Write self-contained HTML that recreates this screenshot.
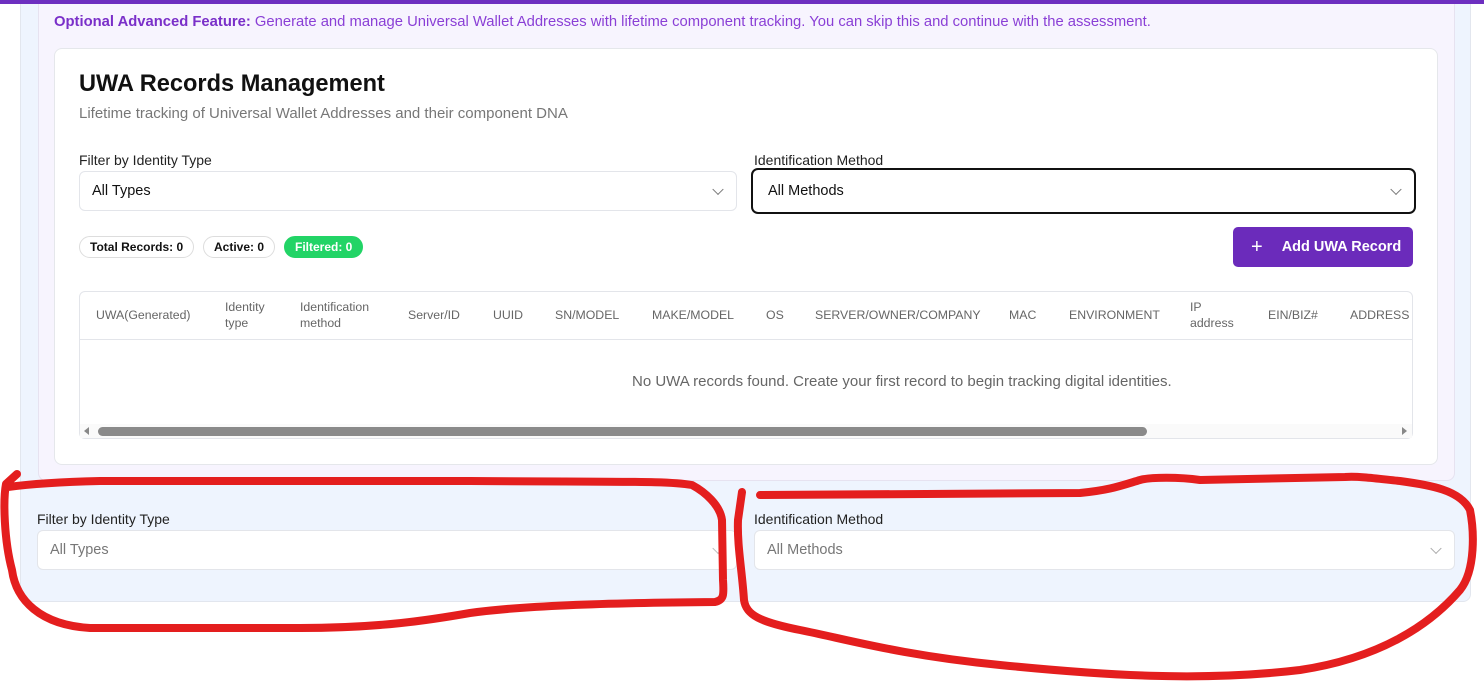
<!DOCTYPE html>
<html><head><meta charset="utf-8"><style>
*{box-sizing:border-box;margin:0;padding:0}
body{width:1484px;height:684px;background:#fff;font-family:"Liberation Sans",sans-serif;position:relative;overflow:hidden;color:#111}
.abs{position:absolute}
.topbar{left:0;top:0;width:1484px;height:4px;background:#6d2fc0}
.outer{left:20px;top:-10px;width:1451px;height:612px;background:#eef4fe;border:1px solid #e2e6ee;border-radius:8px}
.inner{left:38px;top:-10px;width:1417px;height:491px;background:#f7f4fe;border:1px solid #e6e2f0;border-radius:8px}
.card{left:54px;top:48px;width:1384px;height:417px;background:#fff;border:1px solid #e5e7eb;border-radius:8px}
.sel{background:#fff;border:1px solid #e3e5ea;border-radius:6px;font-size:14.5px;padding-left:12px;display:flex;align-items:center}
.chev{position:absolute;right:14px;top:50%;width:8px;height:8px;border-right:1.5px solid #777;border-bottom:1.5px solid #777;transform:translateY(-70%) rotate(45deg)}
.lbl{font-size:14px;color:#222}
.badge{top:236px;height:22px;border:1px solid #ddd;border-radius:11px;font-size:12px;font-weight:bold;display:flex;align-items:center;padding:0 10px;background:#fff}
.th{font-size:12.3px;color:#666;line-height:16px;top:299px}
</style></head><body>
<div class="abs outer"></div>
<div class="abs inner"></div>
<div class="abs topbar"></div>
<div class="abs" style="left:54px;top:14px;font-size:14.8px;color:#8a3fd6"><b style="color:#7a2fc9">Optional Advanced Feature:</b> Generate and manage Universal Wallet Addresses with lifetime component tracking. You can skip this and continue with the assessment.</div>
<div class="abs card"></div>
<div class="abs" style="left:79px;top:71px;font-size:23.6px;font-weight:bold;color:#111">UWA Records Management</div>
<div class="abs" style="left:79px;top:105px;font-size:15px;color:#777">Lifetime tracking of Universal Wallet Addresses and their component DNA</div>
<div class="abs lbl" style="left:79px;top:152px">Filter by Identity Type</div>
<div class="abs sel" style="left:79px;top:171px;width:658px;height:40px">All Types<span class="chev"></span></div>
<div class="abs lbl" style="left:754px;top:152px">Identification Method</div>
<div class="abs sel" style="left:751px;top:168px;width:665px;height:46px;border:2px solid #111;border-radius:7px;padding-left:15px">All Methods<span class="chev"></span></div>
<div class="abs badge" style="left:79px">Total Records: 0</div>
<div class="abs badge" style="left:203px">Active: 0</div>
<div class="abs badge" style="left:284px;background:#22d466;border-color:#22d466;color:#fff">Filtered: 0</div>
<div class="abs" style="left:1233px;top:227px;width:180px;height:40px;background:#6b2bbb;border-radius:5px;color:#fff;font-size:14.5px;font-weight:bold;display:flex;align-items:center"><span style="font-size:20px;font-weight:normal;margin-left:18px;margin-right:19px">+</span>Add UWA Record</div>
<div class="abs" style="left:79px;top:291px;width:1334px;height:148px;border:1px solid #e3e5ea;border-radius:6px;background:#fff"></div>
<div class="abs" style="left:80px;top:339px;width:1332px;height:1px;background:#e3e5ea"></div>
<div class="abs th" style="left:96px;top:307px">UWA(Generated)</div>
<div class="abs th" style="left:225px">Identity<br>type</div>
<div class="abs th" style="left:300px">Identification<br>method</div>
<div class="abs th" style="left:408px;top:307px">Server/ID</div>
<div class="abs th" style="left:493px;top:307px">UUID</div>
<div class="abs th" style="left:555px;top:307px">SN/MODEL</div>
<div class="abs th" style="left:652px;top:307px">MAKE/MODEL</div>
<div class="abs th" style="left:766px;top:307px">OS</div>
<div class="abs th" style="left:815px;top:307px">SERVER/OWNER/COMPANY</div>
<div class="abs th" style="left:1009px;top:307px">MAC</div>
<div class="abs th" style="left:1069px;top:307px">ENVIRONMENT</div>
<div class="abs th" style="left:1190px">IP<br>address</div>
<div class="abs th" style="left:1268px;top:307px">EIN/BIZ#</div>
<div class="abs th" style="left:1350px;top:307px">ADDRESS</div>
<div class="abs" style="left:632px;top:373px;white-space:nowrap;font-size:15px;color:#666">No UWA records found. Create your first record to begin tracking digital identities.</div>
<div class="abs" style="left:80px;top:424px;width:1332px;height:14px;background:#fafafa"></div>
<div class="abs" style="left:84px;top:427px;width:0;height:0;border-top:4px solid transparent;border-bottom:4px solid transparent;border-right:5px solid #888"></div>
<div class="abs" style="left:1402px;top:427px;width:0;height:0;border-top:4px solid transparent;border-bottom:4px solid transparent;border-left:5px solid #888"></div>
<div class="abs" style="left:98px;top:427px;width:1049px;height:9px;background:#8a8a8a;border-radius:5px"></div>
<div class="abs lbl" style="left:37px;top:511px">Filter by Identity Type</div>
<div class="abs sel" style="left:37px;top:530px;width:700px;height:40px;color:#777">All Types<span class="chev" style="border-color:#bbb"></span></div>
<div class="abs lbl" style="left:754px;top:511px">Identification Method</div>
<div class="abs sel" style="left:754px;top:530px;width:701px;height:40px;color:#777">All Methods<span class="chev" style="border-color:#aaa"></span></div>
<svg class="abs" style="left:0;top:0" width="1484" height="684"><g fill="none" stroke="#e41e1e" stroke-width="8" stroke-linecap="round" stroke-linejoin="round">
<path d="M17,474 L6,484 C3,500 4,540 12,570 C16,600 40,625 90,628 L300,628 C380,628 430,620 470,613 C520,606 600,603 715,602 C724,600 724,595 723,580 L722,520 C720,505 705,492 692,485 C670,481 640,482 470,481 L100,481 C60,482 30,484 8,487"/>
<path d="M742,492 L738,520 C737,545 742,570 744,600 C746,615 760,622 800,630 C850,640 900,655 1000,665 C1100,675 1200,682 1300,670 C1380,658 1430,625 1460,590 C1476,570 1474,530 1470,510 C1460,490 1430,485 1400,481 C1380,479 1360,476 1345,477 L1200,480 C1180,477 1150,477 1140,480 C1120,486 1110,490 1080,493 L760,495"/>
</g></svg>
</body></html>
